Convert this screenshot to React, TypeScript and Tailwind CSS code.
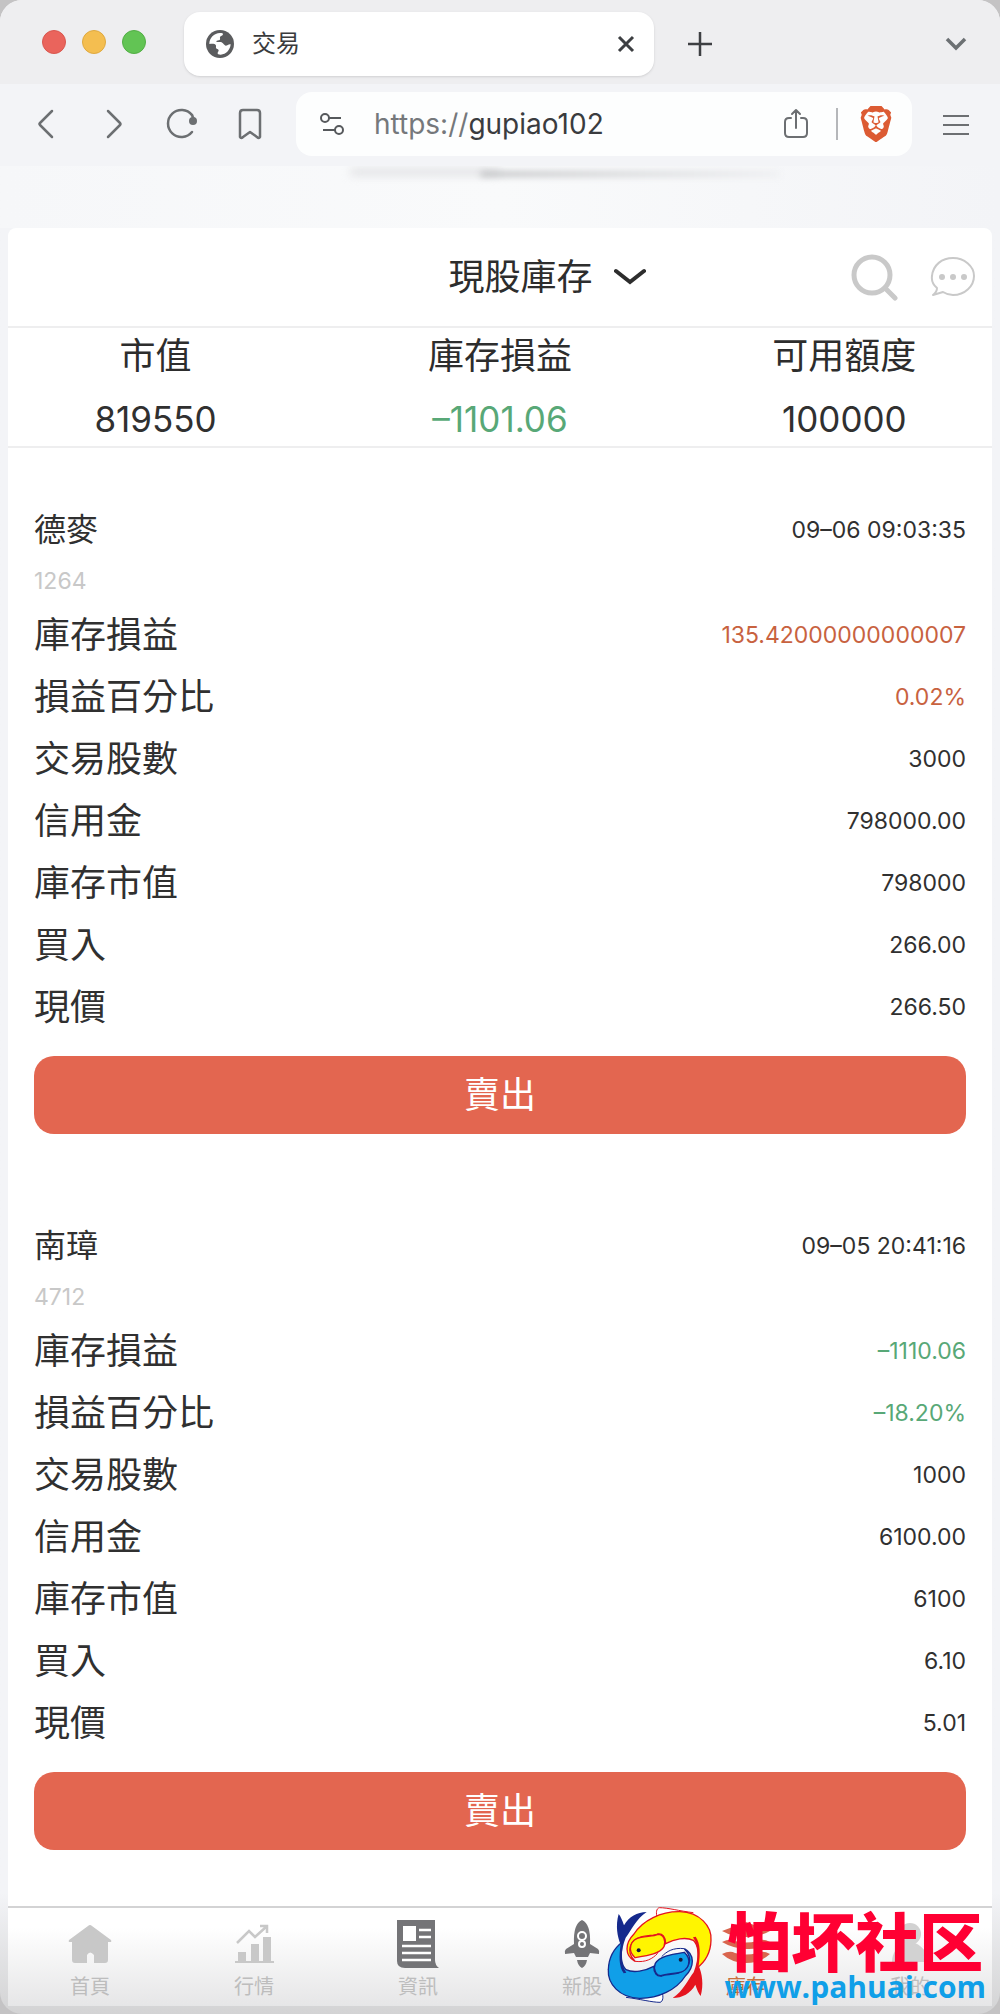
import type { ReactNode } from "react";
import { SiBrave } from "react-icons/si";

type Tone = "up" | "down" | "plain";

type Holding = {
  name: string;
  code: string;
  time: string;
  rows: { label: string; value: string; tone?: Tone }[];
};

const toneClass: Record<Tone, string> = {
  up: "text-[#c8623f]",
  down: "text-[#58a877]",
  plain: "text-[#303030]",
};

const summary: { label: string; value: string; tone: Tone }[] = [
  { label: "市值", value: "819550", tone: "plain" },
  { label: "庫存損益", value: "–1101.06", tone: "down" },
  { label: "可用額度", value: "100000", tone: "plain" },
];

const holdings: Holding[] = [
  {
    name: "德麥",
    code: "1264",
    time: "09–06 09:03:35",
    rows: [
      { label: "庫存損益", value: "135.42000000000007", tone: "up" },
      { label: "損益百分比", value: "0.02%", tone: "up" },
      { label: "交易股數", value: "3000" },
      { label: "信用金", value: "798000.00" },
      { label: "庫存市值", value: "798000" },
      { label: "買入", value: "266.00" },
      { label: "現價", value: "266.50" },
    ],
  },
  {
    name: "南璋",
    code: "4712",
    time: "09–05 20:41:16",
    rows: [
      { label: "庫存損益", value: "–1110.06", tone: "down" },
      { label: "損益百分比", value: "–18.20%", tone: "down" },
      { label: "交易股數", value: "1000" },
      { label: "信用金", value: "6100.00" },
      { label: "庫存市值", value: "6100" },
      { label: "買入", value: "6.10" },
      { label: "現價", value: "5.01" },
    ],
  },
];

const GlobeIcon = () => (
  <svg className="w-7 h-7 shrink-0" viewBox="0 0 84 84">
    <circle cx="42" cy="42" r="42" fill="#5b5c5e" />
    <path
      d="M10 42C10 24 24 10 42 9c6 0 10 1 9 4-1 5-7 4-9 8-1 4 2 6-1 9-3 2-9 0-10 4 0 4 10 1 16 3 6 3 7 9 12 10 5 0 10-6 15-4-1 16-14 31-30 31-6 0-10-1-9-5 0-3 3-4 3-8-1-5-6-3-8-7-1-4 2-6-1-9-4-5-12-3-19-3Z"
      fill="#fff"
    />
  </svg>
);

const FishLogo = () => {
  const fish = (fill: string, line: string) => (
    <>
      <path d="M204 113C199 98 201 84 210 82C235 82 270 92 312 97" fill="#fff" stroke={line} strokeWidth="3" />
      <path
        d="M137 243C105 226 106 189 134 161C160 120 215 93 272 94C331 96 368 137 365 180C364 218 346 246 322 264C327 238 331 198 312 180C289 169 255 176 229 190C229 170 219 158 205 161C195 167 175 164 155 170C122 180 108 213 137 243Z"
        fill={fill}
        stroke={line}
        strokeWidth="4"
      />
      <path
        d="M137 232C113 210 122 176 155 171C176 167 192 168 207 162C222 162 231 181 224 199C212 221 175 226 137 232Z"
        fill={fill}
        stroke={line}
        strokeWidth="4"
      />
      <path d="M137 243C170 247 190 235 205 219" fill="none" stroke={line} strokeWidth="3" />
      <path
        d="M311 171C329 198 329 235 313 276C297 296 281 334 250 353C279 352 303 340 318 313C323 328 328 340 334 347C344 313 338 278 328 256C333 221 334 190 319 169Z"
        fill={line}
      />
    </>
  );
  return (
    <svg className="w-[107px] h-[98px] shrink-0" viewBox="50 77 321 294">
      <g transform="rotate(180 211 224)">{fish("#109fe8", "#15298c")}</g>
      {fish("#fff500", "#e5141e")}
      <circle cx="148" cy="210" r="6" fill="#151a3a" />
      <circle cx="274" cy="238" r="6" fill="#151a3a" />
    </svg>
  );
};

const NavIcon = ({ children, color }: { children: ReactNode; color: string }) => (
  <svg className={"w-12 h-12 " + color} viewBox="0 0 48 48" fill="currentColor">
    {children}
  </svg>
);

const navItems = [
  {
    label: "首頁",
    labelColor: "text-[#bdbdbd]",
    icon: (
      <NavIcon color="text-[#c8c8c8]">
        <path d="M22 6q2-2 4 0l19 14q1 2-1 2h-2v18q0 3-3 3H28V35q-4-5-7 0v8H9q-3 0-3-3V22H4q-2 0-1-2Z" />
      </NavIcon>
    ),
  },
  {
    label: "行情",
    labelColor: "text-[#bdbdbd]",
    icon: (
      <NavIcon color="text-[#c8c8c8]">
        <path d="M8 32h8v9h5V24h8v17h4V17h8v24h3v2H5v-2h3Z" />
        <path d="M7 23 19 11l6 6L36 7M30 6h7v7" fill="none" stroke="currentColor" strokeWidth="2.5" />
      </NavIcon>
    ),
  },
  {
    label: "資訊",
    labelColor: "text-[#bdbdbd]",
    icon: (
      <NavIcon color="text-[#747477]">
        <path d="M3 0h38v40q0 5 4 8H11q-8 0-8-7Z" />
        <path d="M9 6h13v15H9Z" fill="#fff" />
        <path d="M25 10h12M25 17h12M8 26h29M8 33h29M8 40h29" stroke="#fff" strokeWidth="2.5" />
      </NavIcon>
    ),
  },
  {
    label: "新股",
    labelColor: "text-[#bdbdbd]",
    icon: (
      <NavIcon color="text-[#747477]">
        <path d="M24 0q9 4 8 24l8 5q2 2 1 5l-9-1-2 4H18l-2-4-9 1q-1-3 1-5l8-5Q15 4 24 0ZM19 40h10q-1 6-5 8-4-2-5-8Z" />
        <circle cx="24" cy="16" r="4" fill="none" stroke="#fff" strokeWidth="2" />
        <circle cx="24" cy="24" r="3" fill="none" stroke="#fff" strokeWidth="2" />
      </NavIcon>
    ),
  },
  {
    label: "庫存",
    labelColor: "text-[#c8703f]",
    icon: (
      <NavIcon color="text-[#d9654e]">
        <path d="M24 2 48 11q-11 6-24 6T0 11ZM0 22q8-4 13-1 11 3 22 0 6-3 13 1-10 8-24 7T0 22ZM0 34q8-4 13-1 11 3 22 0 6-3 13 1-10 9-24 9T0 34Z" />
      </NavIcon>
    ),
  },
  {
    label: "我的",
    labelColor: "text-[#bdbdbd]",
    icon: (
      <NavIcon color="text-[#d2d2d2]">
        <circle cx="24" cy="14" r="11" />
        <path d="M19 23h10q13 6 13 19H6q0-13 13-19Z" />
      </NavIcon>
    ),
  },
];

const TabStrip = () => (
  <div className="flex items-center h-[84px] pt-1 pl-[42px] pr-8 bg-[#eeeef0]">
    <div className="flex gap-4 pb-1">
      <button aria-label="關閉視窗" className="size-6 rounded-full bg-[#ea645c] border border-[#d9574f]" />
      <button aria-label="最小化" className="size-6 rounded-full bg-[#f4be50] border border-[#dfa940]" />
      <button aria-label="最大化" className="size-6 rounded-full bg-[#62c454] border border-[#52ae45]" />
    </div>
    <div className="flex-1 max-w-[470px] h-16 ml-[38px] pl-[22px] pr-[18px] flex items-center rounded-2xl bg-white shadow-sm">
      <GlobeIcon />
      <span className="ml-[18px] text-2xl text-[#3a3b3d]">交易</span>
      <button aria-label="關閉分頁" className="ml-auto">
        <svg className="size-5" viewBox="0 0 20 20" fill="none" stroke="#3d3f42" strokeWidth="3">
          <path d="m3 3 14 14M17 3 3 17" />
        </svg>
      </button>
    </div>
    <button aria-label="新增分頁" className="ml-[34px]">
      <svg className="size-6" viewBox="0 0 24 24" fill="none" stroke="#3d3f42" strokeWidth="2.5">
        <path d="M12 0v24M0 12h24" />
      </svg>
    </button>
    <button aria-label="搜尋分頁" className="ml-auto">
      <svg className="size-6" viewBox="0 0 24 24" fill="none" stroke="#6c7073" strokeWidth="3.5">
        <path d="m3 7 9 9 9-9" />
      </svg>
    </button>
  </div>
);

const Toolbar = () => (
  <div className="flex items-center pt-2 pb-[10px] pl-[30px] pr-7 bg-[#f3f4f7] text-[#6c6f72]">
    <div className="flex gap-9">
      <button aria-label="上一頁">
        <svg className="size-8" viewBox="0 0 32 32" fill="none" stroke="currentColor" strokeWidth="2.5" strokeLinecap="round" strokeLinejoin="round">
          <path d="M22 3 10 15q-1 1 0 2l12 12" />
        </svg>
      </button>
      <button aria-label="下一頁">
        <svg className="size-8" viewBox="0 0 32 32" fill="none" stroke="currentColor" strokeWidth="2.5" strokeLinecap="round" strokeLinejoin="round">
          <path d="m10 3 12 12q1 1 0 2L10 29" />
        </svg>
      </button>
      <button aria-label="重新載入">
        <svg className="size-8" viewBox="0 0 32 32" fill="none" stroke="currentColor" strokeWidth="2.5" strokeLinecap="round">
          <path d="M26 24A13.5 13.5 0 1 1 26 7" />
          <circle cx="27" cy="13" r="4" fill="currentColor" stroke="none" />
          <path d="m26 7 2 5" />
        </svg>
      </button>
      <button aria-label="加入書籤">
        <svg className="size-8" viewBox="0 0 32 32" fill="none" stroke="currentColor" strokeWidth="2.5" strokeLinejoin="round">
          <path d="M6 29V5q0-3 3-3h14q3 0 3 3v24q-1 2-3 0l-7-5-7 5q-2 2-3 0Z" />
        </svg>
      </button>
    </div>
    <div className="flex-1 min-w-0 h-16 ml-[30px] pl-6 pr-[18px] flex items-center rounded-2xl bg-[#fdfefe]">
      <svg className="size-6 shrink-0" viewBox="0 0 24 24" fill="none" stroke="#56595c" strokeWidth="2">
        <circle cx="5" cy="6" r="4" />
        <path d="M9 6h12M3 18h12" />
        <circle cx="19" cy="18" r="4" />
      </svg>
      <label htmlFor="address" className="ml-[30px] text-[28px] text-[#75787b]">
        https://
      </label>
      <input id="address" defaultValue="gupiao102" className="flex-1 min-w-0 text-[28px] text-[#3a3c3f] outline-none" />
      <button aria-label="分享">
        <svg className="w-6 h-8" viewBox="0 0 24 32" fill="none" stroke="currentColor" strokeWidth="2" strokeLinecap="round" strokeLinejoin="round">
          <path d="M7 10H5q-4 0-4 4v11q0 4 4 4h14q4 0 4-4V14q0-4-4-4h-2M12 20V2M8 6l4-4 4 4" />
        </svg>
      </button>
      <span className="w-[2px] h-8 ml-7 mr-5 bg-[#b5b7ba]" />
      <button aria-label="Brave Shields">
        <SiBrave className="size-9 text-[#dc5b33]" />
      </button>
    </div>
    <button aria-label="選單" className="ml-7">
      <svg className="size-8" viewBox="0 0 32 32" fill="none" stroke="currentColor" strokeWidth="2.2">
        <path d="M3 8h26M3 17h26M3 26h26" />
      </svg>
    </button>
  </div>
);

const AccountHeader = () => (
  <header className="grid grid-cols-[1fr_auto_1fr] items-center h-[100px] pr-4 border-b-2 border-[#eeeeef]">
    <span />
    <label className="flex items-center pl-[110px]">
      <select aria-label="庫存類別" className="appearance-none text-4xl text-[#2d2d2d] outline-none">
        <option>現股庫存</option>
      </select>
      <svg className="w-8 h-5 ml-5 pointer-events-none" viewBox="0 0 32 20" fill="none" stroke="#2d2d2d" strokeWidth="4" strokeLinecap="round">
        <path d="m2 4 14 11L30 4" />
      </svg>
    </label>
    <div className="flex items-center justify-end gap-8">
      <button aria-label="搜尋">
        <svg className="size-12" viewBox="0 0 48 48" fill="none" stroke="#c9c9c9" strokeLinecap="round">
          <circle cx="22" cy="22" r="18" strokeWidth="5" />
          <path d="m36 36 9 9" strokeWidth="5" />
        </svg>
      </button>
      <button aria-label="訊息">
        <svg className="w-[46px] h-10" viewBox="0 0 46 40" fill="#c9c9c9">
          <path
            d="M7 31Q1 26 2 19C3 8 12 1 23 1s21 8 21 18-9 19-21 19c-4 0-7-1-10-3l-10 3q4-3 4-7Z"
            fill="none"
            stroke="#c9c9c9"
            strokeWidth="2"
            strokeLinejoin="round"
          />
          <circle cx="12" cy="20" r="3" />
          <circle cx="23" cy="20" r="3" />
          <circle cx="34" cy="20" r="3" />
        </svg>
      </button>
    </div>
  </header>
);

const Summary = () => (
  <dl className="grid grid-cols-[30%_40%_30%] text-center border-b-2 border-[#eeeeef]">
    {summary.map((item) => (
      <div key={item.label}>
        <dt className="text-4xl leading-[56px] text-[#2d2d2d]">{item.label}</dt>
        <dd className={"pt-2 text-[35px] leading-[54px] " + toneClass[item.tone]}>{item.value}</dd>
      </div>
    ))}
  </dl>
);

const HoldingCard = ({ holding }: { holding: Holding }) => (
  <section className="pt-[54px] pb-[30px] px-[26px]">
    <div className="flex items-center justify-between h-14">
      <h2 className="text-[32px] text-[#303030]">{holding.name}</h2>
      <time className="text-[23px] text-[#303030]">{holding.time}</time>
    </div>
    <p className="text-[23px] leading-[46px] text-[#c8c8c8]">{holding.code}</p>
    <dl>
      {holding.rows.map((row) => (
        <div key={row.label} className="flex items-center justify-between h-[62px]">
          <dt className="text-4xl text-[#303030]">{row.label}</dt>
          <dd className={"text-[23px] " + toneClass[row.tone ?? "plain"]}>{row.value}</dd>
        </div>
      ))}
    </dl>
    <button className="block w-full h-[78px] mt-[18px] rounded-[20px] bg-[#e36650] text-4xl text-white">賣出</button>
  </section>
);

const BottomNav = () => (
  <nav className="grid grid-cols-6 h-[100px] mt-auto border-t-2 border-[#d3d3d4] bg-linear-to-b from-white from-20% to-[#e6e6e7]">
    {navItems.map((item) => (
      <a key={item.label} href="#" className="flex flex-col items-center pt-3">
        {item.icon}
        <span className={"text-xl leading-[38px] " + item.labelColor}>{item.label}</span>
      </a>
    ))}
  </nav>
);

const Watermark = () => (
  <div className="absolute right-[14px] bottom-[10px] flex items-center gap-3 pointer-events-none">
    <FishLogo />
    <div className="text-center">
      <div className="font-['Noto_Sans_CJK_SC',sans-serif] font-black text-[64px] leading-[64px] text-[#ff0033]">怕坏社区</div>
      <div className="font-['Open_Sans',sans-serif] font-bold text-3xl leading-[34px] text-[#109fe8]">www.pahuai.com</div>
    </div>
  </div>
);

export default function App() {
  return (
    <div className="min-h-screen flex bg-[#c4c3c4] font-['Inter','Noto_Sans_CJK_TC',sans-serif]">
      <div className="relative flex-1 min-w-0 flex flex-col rounded-[22px] overflow-hidden bg-linear-to-b from-[#f3f4f7] from-94% to-[#d3d3d4]">
        <TabStrip />
        <Toolbar />
        <div className="relative h-[62px] overflow-hidden bg-linear-to-r from-[#f6f7f9] via-[#f9fafb] to-[#f3f4f7]">
          {/* soft shadow of the page scrolled under the toolbar */}
          <div className="absolute left-[35%] top-[2px] w-[15%] h-2 rounded-full bg-[#e3e4e6] blur-[4px]" />
          <div className="absolute left-[48%] top-[5px] w-[30%] h-[6px] rounded-full bg-linear-to-r from-[#c4c5c7] to-[#eff0f2] blur-[3px]" />
        </div>
        <main className="flex-1 flex flex-col mx-2 mb-2 rounded-t-lg bg-white">
          <AccountHeader />
          <Summary />
          {holdings.map((holding) => (
            <HoldingCard key={holding.code} holding={holding} />
          ))}
          <BottomNav />
        </main>
        <Watermark />
      </div>
    </div>
  );
}
